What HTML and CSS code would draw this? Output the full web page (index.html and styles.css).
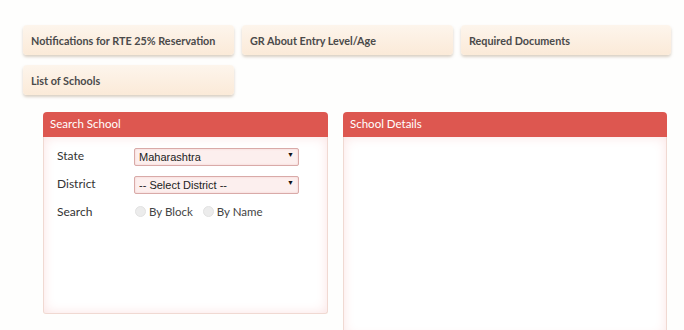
FILE: index.html
```html
<!DOCTYPE html>
<html lang="en">
  <head>
    <meta charset="UTF-8" />
    <meta name="viewport" content="width=device-width, initial-scale=1.0" />
    <title>RTE 25% Admission</title>
    <link rel="stylesheet" href="styles.css">
  </head>
  <body>
    <div class="tabs">
      <a class="tab" href="#">Notifications for RTE 25% Reservation</a>
      <a class="tab" href="#">GR About Entry Level/Age</a>
      <a class="tab" href="#">Required Documents</a>
      <a class="tab" href="#">List of Schools</a>
    </div>

    <div class="panels">
      <div class="panel search-panel">
        <div class="panel-head">Search School</div>
        <div class="panel-body">
          <div class="row">
            <label for="state">State</label>
            <div class="select-wrap">
              <select id="state">
                <option>Maharashtra</option>
              </select>
            </div>
          </div>
          <div class="row">
            <label for="district">District</label>
            <div class="select-wrap">
              <select id="district">
                <option>-- Select District --</option>
              </select>
            </div>
          </div>
          <div class="row">
            <label>Search</label>
            <div class="radios">
              <label class="radio"><span class="dot"></span>By Block</label>
              <label class="radio"><span class="dot"></span>By Name</label>
            </div>
          </div>
        </div>
      </div>

      <div class="panel details-panel">
        <div class="panel-head">School Details</div>
        <div class="panel-body"></div>
      </div>
    </div>
  </body>
</html>
```

FILE: styles.css
```css
body {
  margin: 0;
  background: #fefefd;
  font-family: Lato, "Open Sans", sans-serif;
  color: #333;
}

.tabs {
  display: grid;
  grid-template-columns: 211px 211px 210px;
  column-gap: 8px;
  row-gap: 10px;
  padding: 25px 0 0 23px;
}

.tab {
  display: flex;
  align-items: center;
  height: 30px;
  padding-left: 8px;
  border-radius: 4px;
  background: linear-gradient(#fdf5ec, #fbead8);
  box-shadow: 0 2px 3px rgba(150, 120, 90, 0.35);
  color: #4a4a4a;
  font-size: 10.8px;
  font-weight: bold;
  text-decoration: none;
}

.panels {
  display: flex;
  gap: 15px;
  padding: 17px 0 0 43px;
}

.panel-head {
  height: 25px;
  line-height: 24px;
  padding-left: 7px;
  background: #dd5750;
  border-radius: 4px 4px 0 0;
  color: #fff;
  font-size: 11.5px;
}

.panel-body {
  border: 1px solid #f0d9d2;
  border-top: 0;
  box-shadow: inset 0 0 12px #fbe3e3;
  background: #fff;
}

.search-panel {
  width: 285px;
}

.search-panel .panel-body {
  height: 167px;
  padding: 9px 0 0 13px;
  border-radius: 0 0 3px 3px;
}

.details-panel {
  width: 324px;
}

.details-panel .panel-body {
  height: 200px;
}

.row {
  display: flex;
  align-items: center;
  height: 18px;
  margin-bottom: 10px;
}

.row > label {
  width: 77px;
  font-size: 12px;
  color: #333;
}

.select-wrap {
  position: relative;
  width: 165px;
}

.select-wrap::after {
  content: "\25BC";
  position: absolute;
  right: 5px;
  top: 5px;
  font-size: 7px;
  color: #111;
  pointer-events: none;
}

select {
  appearance: none;
  width: 165px;
  height: 18px;
  padding: 0 0 0 4px;
  border: 1px solid #d9aaa8;
  border-radius: 2px;
  background: #fcefee;
  box-shadow: inset 0 0 2px #f0c9c8;
  font-family: "Liberation Sans", Arial, sans-serif;
  font-size: 11px;
  color: #222;
}

.radios {
  display: flex;
  gap: 10px;
  padding-left: 1px;
  font-size: 11.5px;
  color: #444;
}

.radio {
  display: flex;
  align-items: center;
}

.dot {
  width: 9px;
  height: 9px;
  margin-right: 3px;
  border-radius: 50%;
  background: #ececec;
  border: 1px solid #e2e2e2;
}
```
